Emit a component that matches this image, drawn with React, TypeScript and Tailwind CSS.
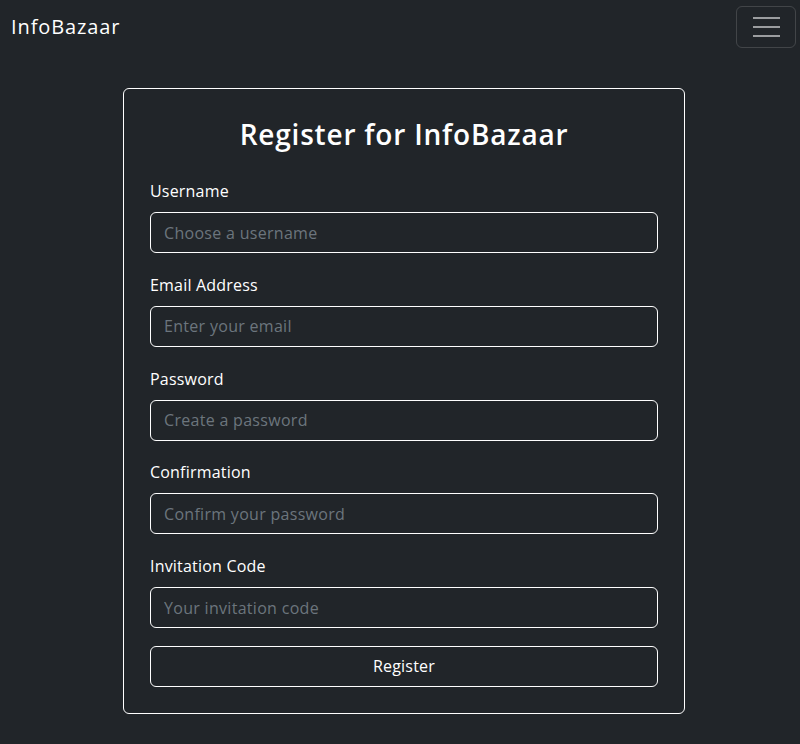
import React from 'react';

const fields = [
  { label: 'Username', placeholder: 'Choose a username', type: 'text' },
  { label: 'Email Address', placeholder: 'Enter your email', type: 'email' },
  { label: 'Password', placeholder: 'Create a password', type: 'password' },
  { label: 'Confirmation', placeholder: 'Confirm your password', type: 'password' },
  { label: 'Invitation Code', placeholder: 'Your invitation code', type: 'text' },
];

export default function App() {
  return (
    <div className="min-h-screen bg-[#212529] text-white font-['Open_Sans',sans-serif]">
      <nav className="flex items-center justify-between h-[54px] pl-[11px] pr-[4px]">
        <span className="text-[20px] leading-[30px] tracking-[0.9px] font-medium">InfoBazaar</span>
        <button className="flex flex-col items-center justify-center gap-[7px] w-[60px] h-[42px] border border-white/15 rounded-md">
          <span className="block w-[27px] h-[2px] bg-white/55" />
          <span className="block w-[27px] h-[2px] bg-white/55" />
          <span className="block w-[27px] h-[2px] bg-white/55" />
        </button>
      </nav>

      <div className="flex justify-center pt-[34px] pl-[8px]">
        <div className="w-[562px] border border-white rounded-md px-[26px] pt-[28px] pb-[26px]">
          <h2 className="text-[28px] leading-[34px] text-center mb-[28px] font-semibold tracking-[0.8px]">
            Register for InfoBazaar
          </h2>
          <form onSubmit={(e) => e.preventDefault()}>
            {fields.map((f) => (
              <div key={f.label} className="mb-[19.75px]">
                <label className="block text-[16px] leading-[24px] mb-[9px] tracking-[0.2px]">{f.label}</label>
                <input
                  type={f.type}
                  placeholder={f.placeholder}
                  className="block w-full h-[41px] px-[13px] bg-[#212529] border border-white rounded-md text-[16px] tracking-[0.3px] text-white placeholder:text-[#6c757d] outline-none"
                />
              </div>
            ))}
            <button
              type="submit"
              className="block w-full h-[41px] mt-[-2px] border border-white rounded-md text-[16px] tracking-[0.2px] text-white"
            >
              Register
            </button>
          </form>
        </div>
      </div>
    </div>
  );
}
